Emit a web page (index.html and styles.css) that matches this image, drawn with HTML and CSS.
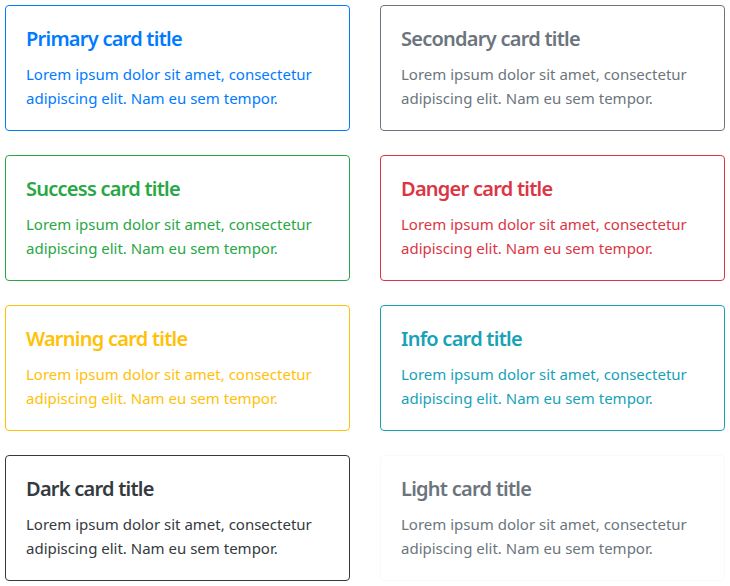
FILE: index.html
```html
<!DOCTYPE html>
<html>
<head>
<meta charset="utf-8">
<link rel="stylesheet" href="styles.css">
</head>
<body>
<div class="grid">
  <div class="card primary"><div class="card-body"><h5 class="card-title">Primary card title</h5><p class="card-text">Lorem ipsum dolor sit amet, consectetur adipiscing elit. Nam eu sem tempor.</p></div></div>
  <div class="card secondary"><div class="card-body"><h5 class="card-title">Secondary card title</h5><p class="card-text">Lorem ipsum dolor sit amet, consectetur adipiscing elit. Nam eu sem tempor.</p></div></div>
  <div class="card success"><div class="card-body"><h5 class="card-title">Success card title</h5><p class="card-text">Lorem ipsum dolor sit amet, consectetur adipiscing elit. Nam eu sem tempor.</p></div></div>
  <div class="card danger"><div class="card-body"><h5 class="card-title">Danger card title</h5><p class="card-text">Lorem ipsum dolor sit amet, consectetur adipiscing elit. Nam eu sem tempor.</p></div></div>
  <div class="card warning"><div class="card-body"><h5 class="card-title">Warning card title</h5><p class="card-text">Lorem ipsum dolor sit amet, consectetur adipiscing elit. Nam eu sem tempor.</p></div></div>
  <div class="card info"><div class="card-body"><h5 class="card-title">Info card title</h5><p class="card-text">Lorem ipsum dolor sit amet, consectetur adipiscing elit. Nam eu sem tempor.</p></div></div>
  <div class="card dark"><div class="card-body"><h5 class="card-title">Dark card title</h5><p class="card-text">Lorem ipsum dolor sit amet, consectetur adipiscing elit. Nam eu sem tempor.</p></div></div>
  <div class="card light"><div class="card-body"><h5 class="card-title">Light card title</h5><p class="card-text">Lorem ipsum dolor sit amet, consectetur adipiscing elit. Nam eu sem tempor.</p></div></div>
</div>
</body>
</html>
```
FILE: styles.css
```css
* { box-sizing: border-box; }
body {
  margin: 5px;
  background: #fff;
  font-family: "Noto Sans", "Open Sans", sans-serif;
  font-size: 16px;
  line-height: 1.5;
}
.grid {
  display: grid;
  grid-template-columns: 345px 345px;
  column-gap: 30px;
  row-gap: 24px;
}
.card {
  border: 1px solid;
  border-radius: 4px;
  height: 126px;
}
.card-body { padding: 20px; }
.card-title {
  margin: 1px 0 11px;
  font-size: 20px;
  font-weight: 600;
  line-height: 1.2;
  letter-spacing: -0.75px;
}
.card-text {
  margin: 0;
  font-size: 15px;
  line-height: 24px;
  letter-spacing: 0;
}
.primary { border-color: #007bff; color: #007bff; }
.secondary { border-color: #6c757d; color: #6c757d; }
.success { border-color: #28a745; color: #28a745; }
.danger { border-color: #dc3545; color: #dc3545; }
.warning { border-color: #ffc107; color: #ffc107; }
.info { border-color: #17a2b8; color: #17a2b8; }
.dark { border-color: #343a40; color: #343a40; }
.light { border-color: #f8f9fa; color: #6c757d; }
```
